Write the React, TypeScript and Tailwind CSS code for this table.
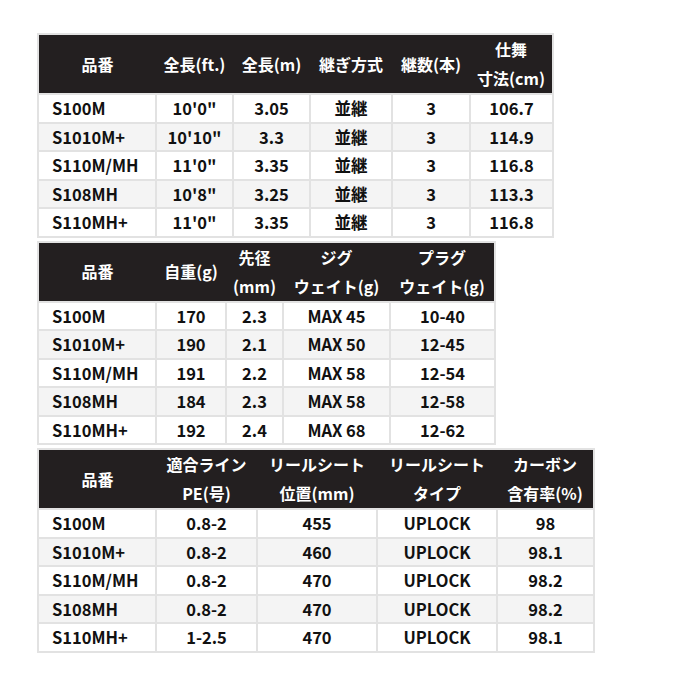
import React from 'react';

type Table = {
  widths: number[];
  head: string[][];
  rows: string[][];
};

const tables: Table[] = [
  {
    widths: [118, 77, 77, 82, 78, 83],
    head: [['品番'], ['全長(ft.)'], ['全長(m)'], ['継ぎ方式'], ['継数(本)'], ['仕舞', '寸法(cm)']],
    rows: [
      ['S100M', `10'0"`, '3.05', '並継', '3', '106.7'],
      ['S1010M+', `10'10"`, '3.3', '並継', '3', '114.9'],
      ['S110M/MH', `11'0"`, '3.35', '並継', '3', '116.8'],
      ['S108MH', `10'8"`, '3.25', '並継', '3', '113.3'],
      ['S110MH+', `11'0"`, '3.35', '並継', '3', '116.8'],
    ],
  },
  {
    widths: [118, 70, 57, 107, 105],
    head: [['品番'], ['自重(g)'], ['先径', '(mm)'], ['ジグ', 'ウェイト(g)'], ['プラグ', 'ウェイト(g)']],
    rows: [
      ['S100M', '170', '2.3', 'MAX 45', '10-40'],
      ['S1010M+', '190', '2.1', 'MAX 50', '12-45'],
      ['S110M/MH', '191', '2.2', 'MAX 58', '12-54'],
      ['S108MH', '184', '2.3', 'MAX 58', '12-58'],
      ['S110MH+', '192', '2.4', 'MAX 68', '12-62'],
    ],
  },
  {
    widths: [118, 101, 120, 120, 97],
    head: [['品番'], ['適合ライン', 'PE(号)'], ['リールシート', '位置(mm)'], ['リールシート', 'タイプ'], ['カーボン', '含有率(%)']],
    rows: [
      ['S100M', '0.8-2', '455', 'UPLOCK', '98'],
      ['S1010M+', '0.8-2', '460', 'UPLOCK', '98.1'],
      ['S110M/MH', '0.8-2', '470', 'UPLOCK', '98.2'],
      ['S108MH', '0.8-2', '470', 'UPLOCK', '98.2'],
      ['S110MH+', '1-2.5', '470', 'UPLOCK', '98.1'],
    ],
  },
];

function SpecTable({ t }: { t: Table }) {
  const total = t.widths.reduce((a, b) => a + b, 0);
  return (
    <table className="table-fixed border-collapse border-2 border-[#e2e2e2]" style={{ width: total }}>
      <colgroup>
        {t.widths.map((w, i) => (
          <col key={i} style={{ width: w }} />
        ))}
      </colgroup>
      <thead>
        <tr className="h-[56px] bg-[#231f20] text-white">
          {t.head.map((lines, i) => (
            <th key={i} className="p-0 text-center align-middle text-[16px] font-bold leading-[29px]">
              {lines.map((l, j) => (
                <div key={j}>{l}</div>
              ))}
            </th>
          ))}
        </tr>
      </thead>
      <tbody>
        {t.rows.map((r, ri) => (
          <tr key={ri} className={`h-[28.5px] ${ri % 2 === 1 ? 'bg-[#f4f4f4]' : 'bg-white'}`}>
            {r.map((c, ci) => (
              <td
                key={ci}
                className={`border-2 border-[#e2e2e2] p-0 text-[16.5px] font-bold leading-[20px] text-[#111] ${
                  ci === 0 ? 'pl-[13px] text-left' : 'text-center'
                }`}
              >
                {c}
              </td>
            ))}
          </tr>
        ))}
      </tbody>
    </table>
  );
}

export default function App() {
  return (
    <div
      className="min-h-[680px] bg-white pl-[37px] pt-[33px]"
      style={{ fontFamily: '"Noto Sans CJK JP", "Noto Sans", sans-serif' }}
    >
      <div className="flex flex-col items-start gap-[3px]">
        {tables.map((t, i) => (
          <SpecTable key={i} t={t} />
        ))}
      </div>
    </div>
  );
}
